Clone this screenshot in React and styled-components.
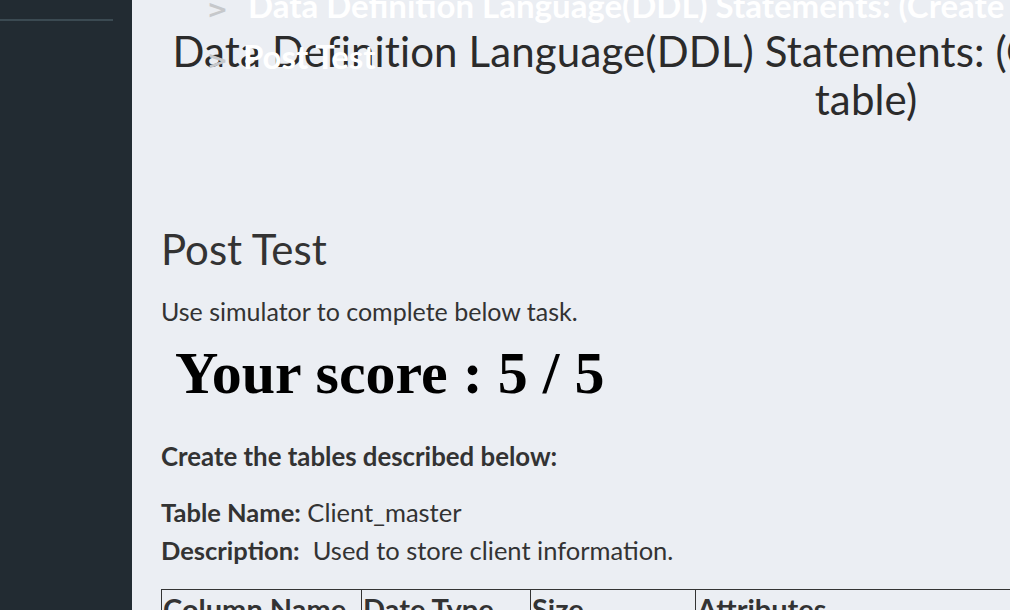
import React from "react";
import styled, { createGlobalStyle } from "styled-components";

const GlobalStyle = createGlobalStyle`
  html, body {
    margin: 0;
    padding: 0;
    overflow: hidden;
    background: #ebeef3;
  }
  body {
    font-family: Lato, "Noto Sans", sans-serif;
    color: #333;
  }
`;

const Page = styled.div`
  display: flex;
  min-height: 610px;
  position: relative;
`;

const Sidebar = styled.aside`
  flex: 0 0 132px;
  height: 610px;
  background: #222b32;
  padding-top: 19px;
  box-sizing: border-box;
`;

const SideRule = styled.div`
  width: 113px;
  height: 2px;
  background: #3b4a52;
`;

const Main = styled.main`
  flex: 0 0 auto;
  width: 1439px;
  padding: 0 0 0 29px;
  box-sizing: border-box;
`;

const Crumbs = styled.ul`
  position: absolute;
  top: -18px;
  left: 207px;
  margin: 0;
  padding: 0;
  list-style: none;
  white-space: nowrap;
  font-weight: 700;
  font-size: 33px;
  line-height: 47px;
  color: #fff;
`;

const Crumb = styled.li`
  display: flex;
  align-items: baseline;
  gap: ${({ $gap }) => $gap || "20px"};
  &::before {
    content: ">";
    font-family: "DejaVu Sans", sans-serif;
    font-size: 25px;
    color: #c6c8cb;
  }
`;

const Title = styled.h1`
  margin: 27px 0 0;
  font-weight: 400;
  font-size: 42px;
  line-height: 48px;
  letter-spacing: 0.14px;
  text-align: center;
  color: #2b2b2b;
`;

const Section = styled.h2`
  margin: 102px 0 0;
  font-weight: 400;
  font-size: 42px;
  line-height: 48px;
  color: #333;
`;

const Lead = styled.p`
  margin: 23px 0 0;
  font-size: 25px;
  line-height: 30px;
`;

const Score = styled.h1`
  margin: 12px 0 0 14px;
  font-family: "Liberation Serif", "Times New Roman", serif;
  font-weight: 700;
  font-size: 60px;
  line-height: 70px;
  color: #000;
`;

const Task = styled.p`
  margin: 33px 0 0;
  font-size: 25.8px;
  font-weight: 700;
  line-height: 30px;
`;

const Info = styled.p`
  margin: ${({ $first }) => ($first ? "24px" : "4px")} 0 0;
  font-size: 25.5px;
  line-height: 34px;
  b {
    font-weight: 700;
  }
`;

const Table = styled.table`
  margin-top: 22px;
  width: 1240px;
  table-layout: fixed;
  border-collapse: collapse;
  font-size: 29px;
  line-height: 34px;
`;

const Th = styled.th`
  border: 1px solid #333;
  text-align: left;
  font-weight: 700;
  padding: 2px 1px;
  width: ${({ $w }) => $w};
  white-space: nowrap;
  overflow: hidden;
`;

export default function App() {
  return (
    <>
      <GlobalStyle />
      <Page>
        <Sidebar>
          <SideRule />
        </Sidebar>
        <Main>
          <Title>Data Definition Language(DDL) Statements: (Create table, Alter table, Drop table)</Title>
          <Section>Post Test</Section>
          <Lead>Use simulator to complete below task.</Lead>
          <Score>Your score : 5 / 5</Score>
          <Task>Create the tables described below:</Task>
          <Info $first>
            <b>Table Name:</b> Client_master
          </Info>
          <Info>
            <b>Description:</b>&nbsp; Used to store client information.
          </Info>
          <Table>
            <thead>
              <tr>
                <Th $w="197px">Column Name</Th>
                <Th $w="166px">Date Type</Th>
                <Th $w="162px">Size</Th>
                <Th>Attributes</Th>
              </tr>
            </thead>
          </Table>
        </Main>
        <Crumbs>
          <Crumb>Data Definition Language(DDL) Statements: (Create table, Alter table, Drop table)</Crumb>
          <Crumb $gap="15px">Post Test</Crumb>
        </Crumbs>
      </Page>
    </>
  );
}
